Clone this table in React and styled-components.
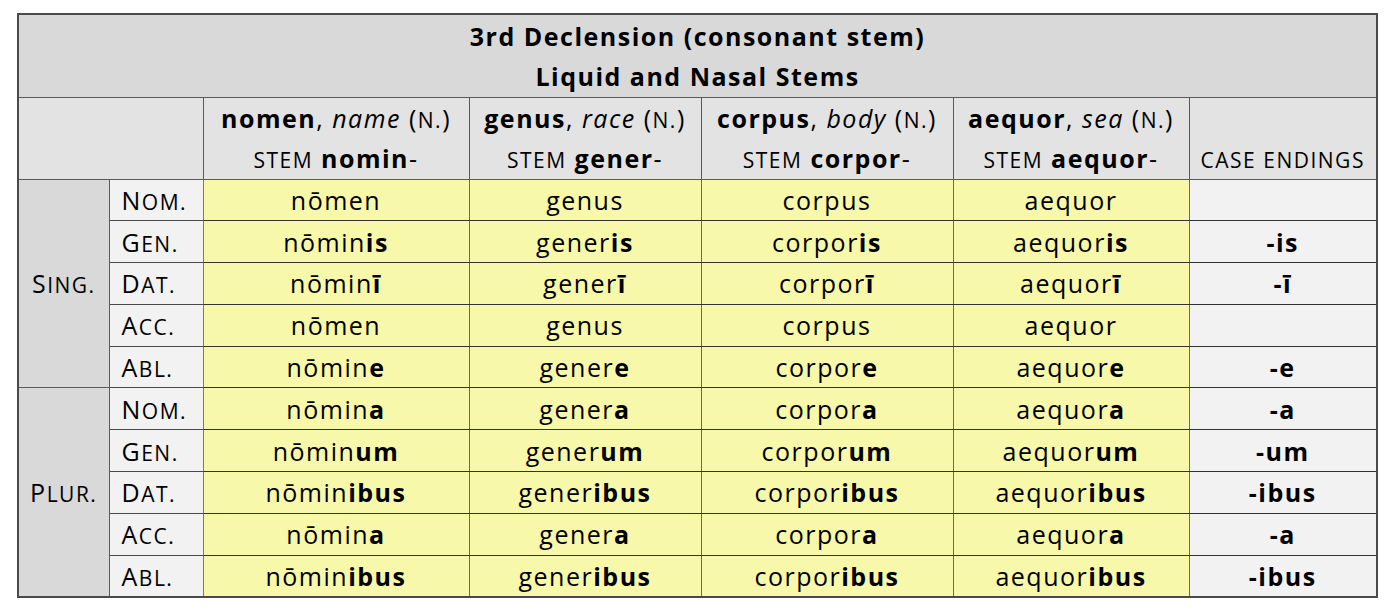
import styled, { createGlobalStyle } from 'styled-components';

const GlobalStyle = createGlobalStyle`
  body {
    margin: 0;
    padding: 13px 0 0 17px;
    background: #ffffff;
    font-family: "Open Sans", "Noto Sans", sans-serif;
    color: #000;
  }
`;

const Table = styled.table`
  border-collapse: collapse;
  table-layout: fixed;
  width: 1359px;
  font-size: 25px;
  letter-spacing: 1.5px;
  border: 2px solid #4a4a4a;
`;

const Col = styled.col`
  width: ${(p) => p.$w}px;
`;

const TitleRow = styled.tr`
  height: 83px;
`;

const HeadRow = styled.tr`
  height: 82px;
`;

const DataRow = styled.tr`
  height: 41.8px;
`;

const TitleCell = styled.th`
  background: #d9d9d9;
  padding: 0;
  font-weight: 700;
  line-height: 40px;
  text-align: center;
  border: 1.5px solid #5a5a5a;
`;

const HeadCell = styled.th`
  background: #e3e3e3;
  padding: ${(p) => (p.$bottom ? '0 0 1px' : '0')};
  font-weight: 400;
  line-height: 40px;
  text-align: center;
  vertical-align: ${(p) => (p.$bottom ? 'bottom' : 'middle')};
  border: 1.5px solid #5a5a5a;
  white-space: nowrap;
`;

const NumberCell = styled.th`
  background: #d9d9d9;
  font-weight: 400;
  text-align: center;
  padding: 0;
  border: 1.5px solid #5a5a5a;
`;

const CaseCell = styled.th`
  background: #f2f2f2;
  font-weight: 400;
  text-align: left;
  padding: 0 0 0 12px;
  line-height: 36px;
  border: 1.5px solid #4a4a4a;
  border-left-color: #7a7a7a;
  border-right-color: #7a7a7a;
`;

const FormCell = styled.td`
  background: #f8f8aa;
  text-align: center;
  padding: 0;
  line-height: 36px;
  border: 1.5px solid #333;
  border-left-color: #6a6a6a;
  border-right-color: #6a6a6a;
`;

const EndingCell = styled.td`
  background: #f2f2f2;
  text-align: center;
  font-weight: 700;
  padding: 0;
  line-height: 36px;
  border: 1.5px solid #333;
  border-left-color: #6a6a6a;
`;

const Small = styled.span`
  font-size: 0.84em;
  line-height: 1;
  text-transform: uppercase;
`;

// small caps like Calibri's: capitals stay full size, lowercase runs shrink
function SmallCaps({ text }) {
  const parts = text.match(/[a-z .]+|[^a-z .]+/g) || [];
  return parts.map((p, i) => (/[a-z]/.test(p) ? <Small key={i}>{p}</Small> : p));
}

const colWidths = [91, 94, 266, 232, 252, 236, 188];

const nouns = [
  { lemma: 'nomen', gloss: 'name', stem: 'nomin', base: 'nōmin', nom: 'nōmen' },
  { lemma: 'genus', gloss: 'race', stem: 'gener', base: 'gener', nom: 'genus' },
  { lemma: 'corpus', gloss: 'body', stem: 'corpor', base: 'corpor', nom: 'corpus' },
  { lemma: 'aequor', gloss: 'sea', stem: 'aequor', base: 'aequor', nom: 'aequor' },
];

const rows = [
  { num: 'Sing.', kase: 'Nom.', end: null, label: '' },
  { num: 'Sing.', kase: 'Gen.', end: 'is', label: '-is' },
  { num: 'Sing.', kase: 'Dat.', end: 'ī', label: '-ī' },
  { num: 'Sing.', kase: 'Acc.', end: null, label: '' },
  { num: 'Sing.', kase: 'Abl.', end: 'e', label: '-e' },
  { num: 'Plur.', kase: 'Nom.', end: 'a', label: '-a' },
  { num: 'Plur.', kase: 'Gen.', end: 'um', label: '-um' },
  { num: 'Plur.', kase: 'Dat.', end: 'ibus', label: '-ibus' },
  { num: 'Plur.', kase: 'Acc.', end: 'a', label: '-a' },
  { num: 'Plur.', kase: 'Abl.', end: 'ibus', label: '-ibus' },
];

export default function App() {
  return (
    <>
      <GlobalStyle />
      <Table>
        <colgroup>
          {colWidths.map((w, i) => (
            <Col key={i} $w={w} />
          ))}
        </colgroup>
        <thead>
          <TitleRow>
            <TitleCell colSpan={7}>
              3rd Declension (consonant stem)
              <br />
              Liquid and Nasal Stems
            </TitleCell>
          </TitleRow>
          <HeadRow>
            <HeadCell colSpan={2} />
            {nouns.map((n) => (
              <HeadCell key={n.lemma}>
                <b>{n.lemma}</b>, <i>{n.gloss}</i> (<Small>n.</Small>)
                <br />
                <Small>stem</Small> <b>{n.stem}</b>-
              </HeadCell>
            ))}
            <HeadCell $bottom>
              <Small>case endings</Small>
            </HeadCell>
          </HeadRow>
        </thead>
        <tbody>
          {rows.map((r, i) => (
            <DataRow key={i}>
              {i % 5 === 0 && (
                <NumberCell rowSpan={5}>
                  <SmallCaps text={r.num} />
                </NumberCell>
              )}
              <CaseCell>
                <SmallCaps text={r.kase} />
              </CaseCell>
              {nouns.map((n) => (
                <FormCell key={n.lemma}>
                  {r.end ? (
                    <>
                      {n.base}
                      <b>{r.end}</b>
                    </>
                  ) : (
                    n.nom
                  )}
                </FormCell>
              ))}
              <EndingCell>{r.label}</EndingCell>
            </DataRow>
          ))}
        </tbody>
      </Table>
    </>
  );
}
